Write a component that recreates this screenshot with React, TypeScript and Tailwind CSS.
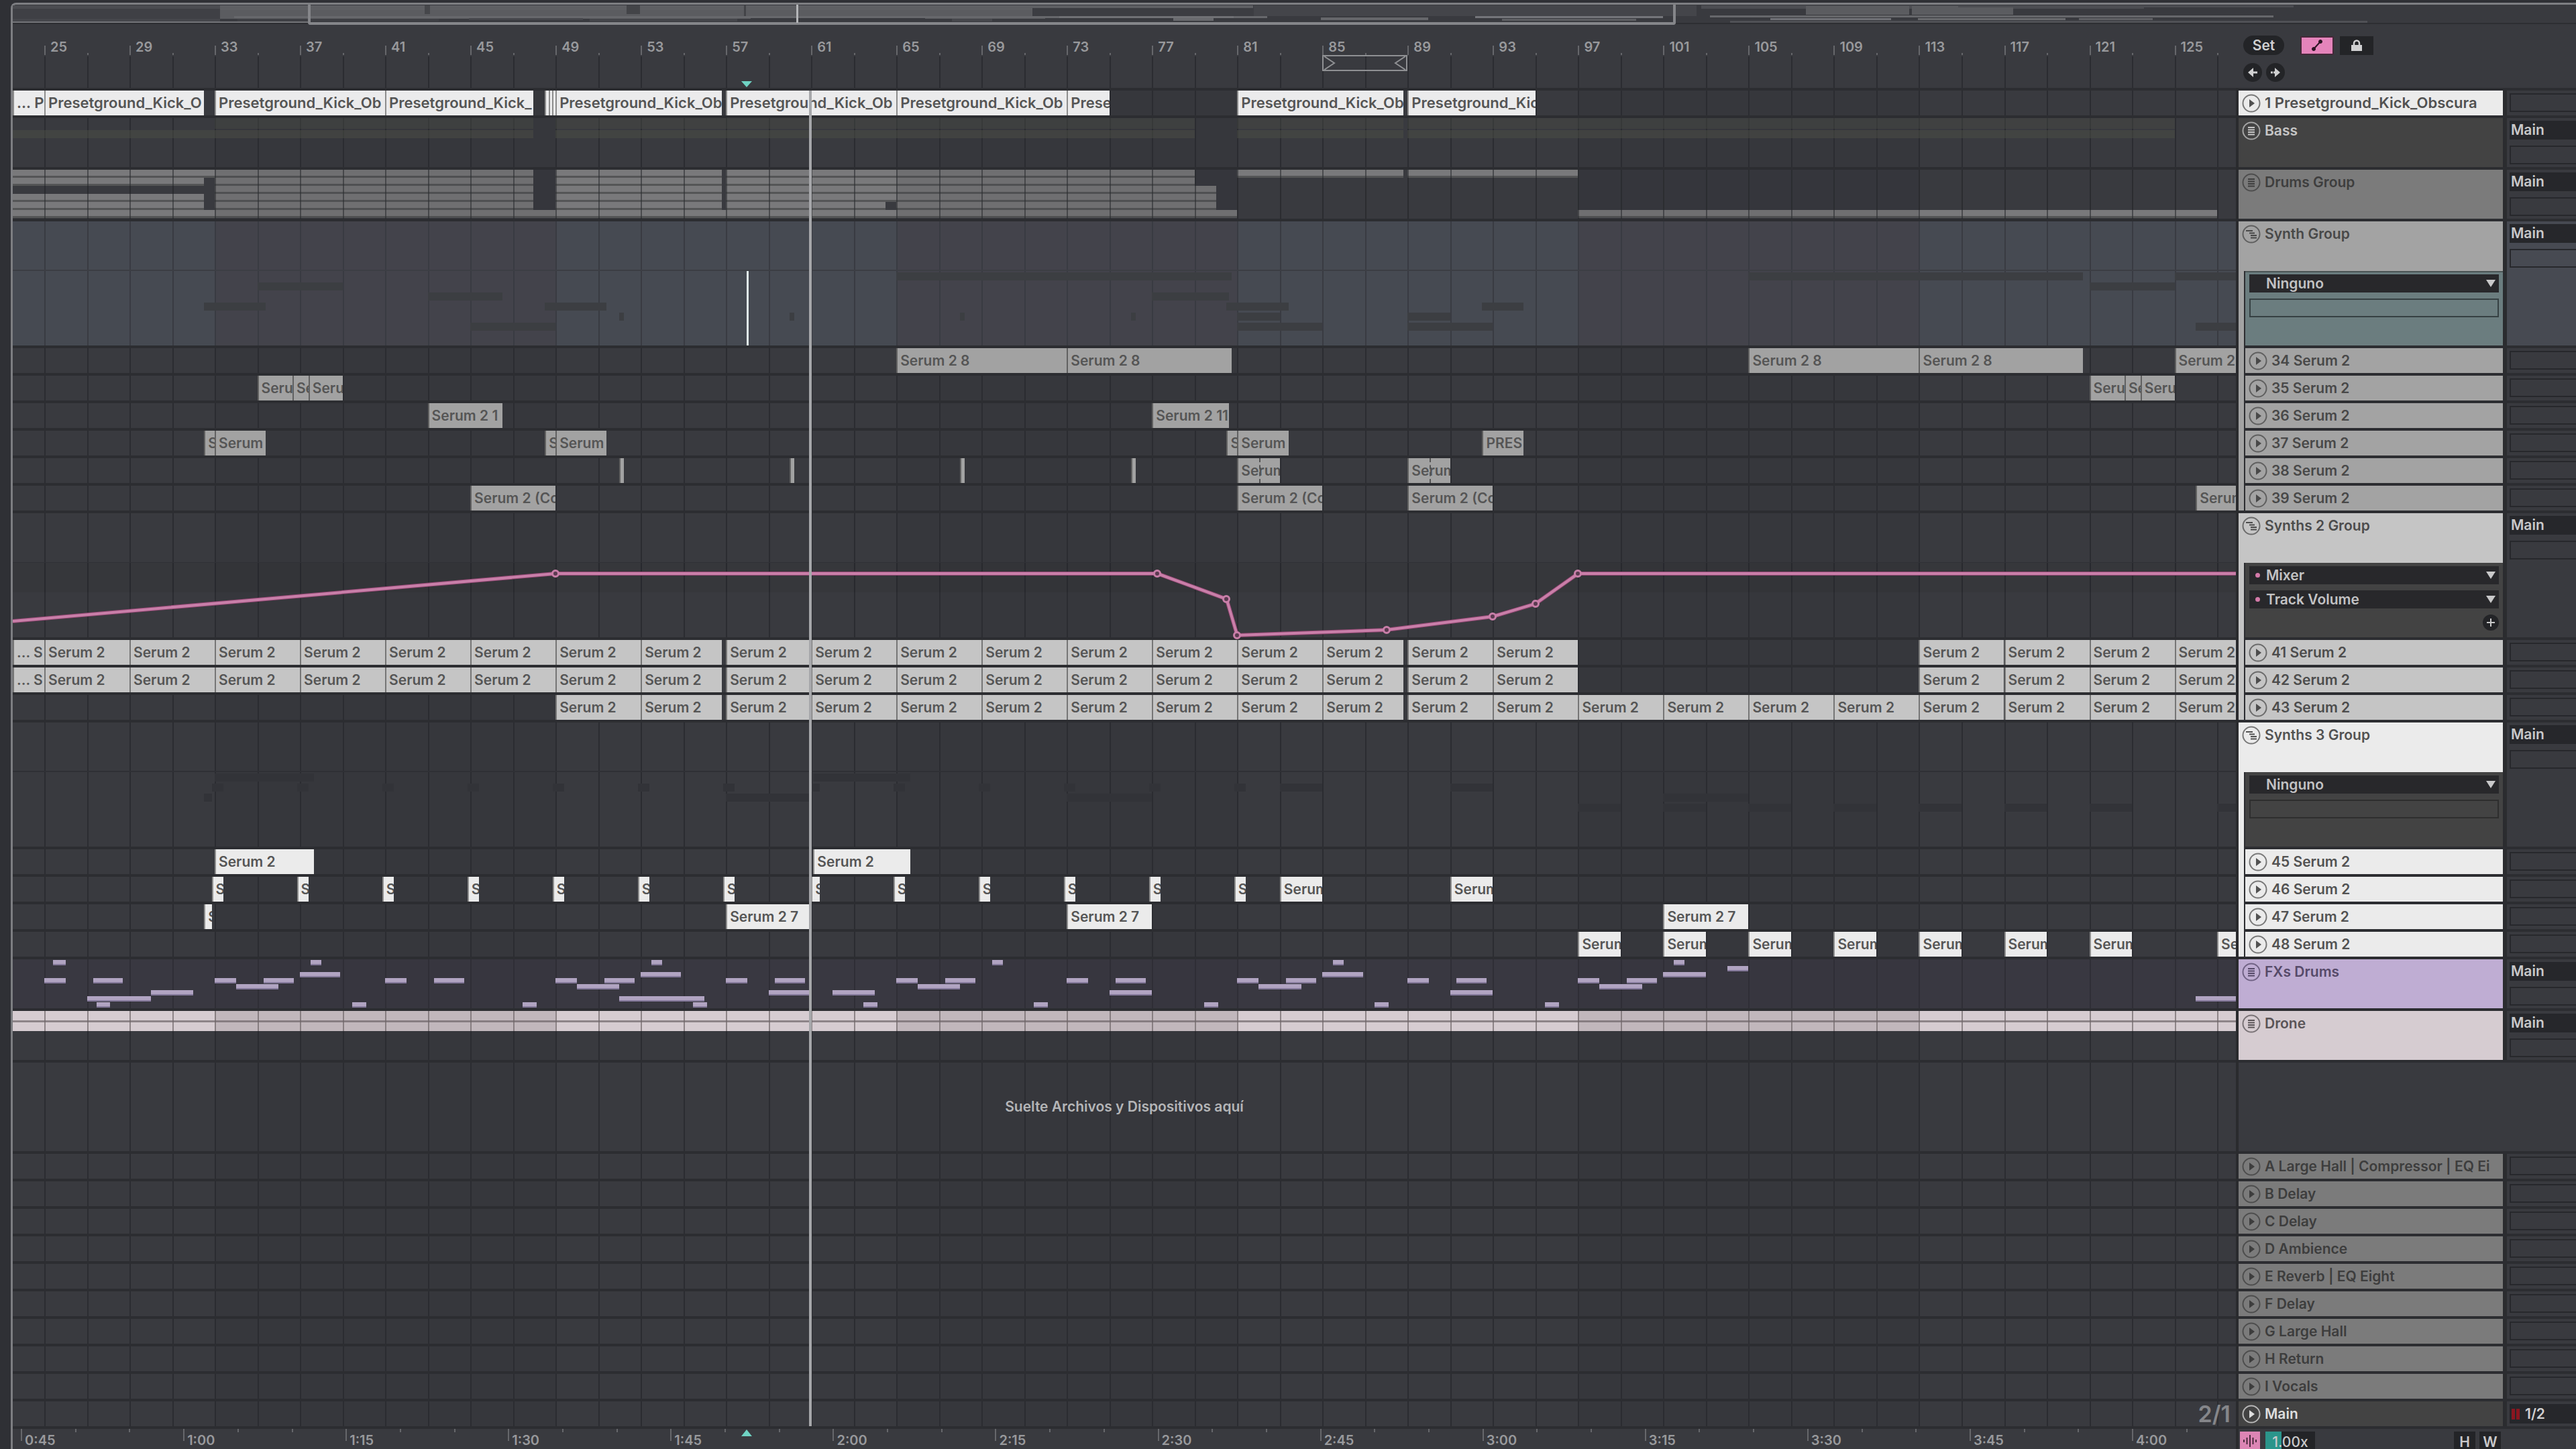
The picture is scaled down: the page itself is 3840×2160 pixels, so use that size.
import React from "react";

type Clip = [start: number, end: number, label?: string, marker?: boolean];

const FIRST_BAR = 23.52;
const LAST_BAR = 127.88;
const SPAN = LAST_BAR - FIRST_BAR;
const at = (bar: number) => `${((bar - FIRST_BAR) / SPAN) * 100}%`;
const wide = (a: number, b: number) => `${((Math.min(b, LAST_BAR) - a) / SPAN) * 100}%`;

const every = (from: number, to: number, step: number) => {
  const out: number[] = [];
  for (let b = from; b <= to; b += step) out.push(b);
  return out;
};

const KICK = "Presetground_Kick_Ob";
const kickClips: Clip[] = [
  [FIRST_BAR, 25, "... P"],
  [25, 32.5, "Presetground_Kick_O"],
  [33, 41, KICK],
  [41, 47.95, "Presetground_Kick_"],
  [48.5, 48.67],
  [48.67, 48.84],
  [48.84, 49],
  [49, 56.8, KICK],
  [57, 65, KICK],
  [65, 73, KICK],
  [73, 75, "Prese"],
  [81, 88.8, KICK],
  [89, 95, "Presetground_Kic"],
];

const synthTracks: { name: string; clips: Clip[] }[] = [
  {
    name: "34 Serum 2",
    clips: [
      [65, 73, "Serum 2 8"],
      [73, 80.75, "Serum 2 8"],
      [105, 113, "Serum 2 8"],
      [113, 120.7, "Serum 2 8"],
      [125, 129, "Serum 2"],
    ],
  },
  {
    name: "35 Serum 2",
    clips: [
      [35, 36.65, "Seru"],
      [36.65, 37.4, "Se"],
      [37.4, 39, "Seru"],
      [121, 122.65, "Seru"],
      [122.65, 123.4, "Se"],
      [123.4, 125, "Seru"],
    ],
  },
  { name: "36 Serum 2", clips: [[43, 46.5, "Serum 2 1"], [77, 80.6, "Serum 2 11"]] },
  {
    name: "37 Serum 2",
    clips: [
      [32.5, 33, "S"],
      [33, 35.4, "Serum"],
      [48.5, 49, "S"],
      [49, 51.4, "Serum"],
      [80.5, 81, "S"],
      [81, 83.4, "Serum"],
      [92.5, 94.45, "PRES"],
    ],
  },
  {
    name: "38 Serum 2",
    clips: [
      [52, 52.22],
      [60, 60.22],
      [68, 68.22],
      [76, 76.22],
      [81, 83, "Serum", true],
      [89, 91, "Serum", true],
    ],
  },
  {
    name: "39 Serum 2",
    clips: [
      [45, 49, "Serum 2 (Co"],
      [81, 85, "Serum 2 (Co"],
      [89, 93, "Serum 2 (Co"],
      [126, 130, "Serum"],
    ],
  },
];

const fourBars = (from: number, to: number): Clip[] =>
  every(from, to, 4).map((b): Clip => [b, b === 53 || b === 85 ? b + 3.8 : b + 4, "Serum 2"]);

const layered: Clip[] = [[FIRST_BAR, 25, "... S"], ...fourBars(25, 93), ...fourBars(113, 125)];
const synth2Tracks: { name: string; clips: Clip[] }[] = [
  { name: "41 Serum 2", clips: layered },
  { name: "42 Serum 2", clips: layered },
  { name: "43 Serum 2", clips: fourBars(49, 125) },
];

const synth3Tracks: { name: string; clips: Clip[] }[] = [
  { name: "45 Serum 2", clips: [[33, 37.65, "Serum 2"], [61.1, 65.65, "Serum 2"]] },
  {
    name: "46 Serum 2",
    clips: [
      ...every(33, 81, 4).map((b): Clip => [b === 61 ? 61 : b - 0.14, b + 0.4, "S"]),
      [83, 85, "Serum"],
      [91, 93, "Serum"],
    ],
  },
  {
    name: "47 Serum 2",
    clips: [
      [32.5, 32.86, "S"],
      [57, 60.95, "Serum 2 7"],
      [73, 77, "Serum 2 7"],
      [101, 105, "Serum 2 7"],
    ],
  },
  {
    name: "48 Serum 2",
    clips: [97, 101, 105, 109, 113, 117, 121, 127].map((b): Clip => [b, b + 2, b === 127 ? "Se" : "Serum"]),
  },
];

const drumLanes: Clip[][] = [
  [[FIRST_BAR, 47.95], [49, 56.8], [57, 79], [81, 88.8], [89, 97]],
  [[FIRST_BAR, 32.5], [33, 47.95], [49, 56.8], [57, 79]],
  [[33, 47.95], [49, 56.8], [57, 80]],
  [[FIRST_BAR, 32.5], [33, 47.95], [49, 56.8], [57, 80]],
  [[FIRST_BAR, 32.5], [33, 47.95], [49, 56.8], [57, 64.5], [65, 80]],
  [[FIRST_BAR, 81], [97, 127]],
];

const fxLanes: [number, number][][] = [
  [[25.4, 26], [37.5, 38], [53.5, 54], [69.5, 70], [85.5, 86], [101.5, 102]],
  [[104, 105]],
  [[37, 38.9], [53, 54.9], [85, 86.9], [101, 103]],
  [
    [25, 26], [27.3, 28.7], [33, 34], [35.3, 36.7], [41, 42], [43.3, 44.7], [49, 50], [51.3, 52.7],
    [57, 58], [59.3, 60.7], [65, 66], [67.3, 68.7], [73, 74], [75.3, 76.7], [81, 82], [83.3, 84.7],
    [89, 90], [91.3, 92.7], [97, 98], [99.3, 100.7],
  ],
  [[34, 36], [50, 52], [66, 68], [82, 84], [98, 100]],
  [[30, 32], [59, 60.9], [62, 64], [75, 77], [91, 93]],
  [[27, 30], [52, 56], [126, 130]],
  [
    [27.45, 28.1], [39.45, 40.1], [47.45, 48.1], [55.45, 56.1], [63.45, 64.1], [71.45, 72.1],
    [79.45, 80.1], [87.45, 88.1], [95.45, 96.1],
  ],
];

const envelope: [bar: number, y: number][] = [
  [49, 16],
  [77.25, 16],
  [80.5, 54],
  [81, 108],
  [88, 100],
  [93, 80],
  [95, 61],
  [97, 16],
];

const overviewBlocks: [x: number, w: number, y: number, h: number, tone: string][] = [
  [0, 309, 1, 5, "bg-[#4b4c51]"],
  [0, 309, 6, 15, "bg-[#3f4045]"],
  [0, 309, 21, 5, "bg-[#46474c]"],
  [309, 1540, 1, 7, "bg-[#5e5f63]"],
  [309, 1230, 8, 13, "bg-[#5b5c60]"],
  [330, 1540, 17, 3, "bg-[#67686c]"],
  [335, 300, 21, 4, "bg-[#3e3f44]"],
  [680, 170, 20, 3, "bg-[#46474c]"],
  [860, 220, 21, 4, "bg-[#44454a]"],
  [1100, 260, 20, 3, "bg-[#393a3f]"],
  [1400, 60, 21, 4, "bg-[#46474c]"],
  [614, 8, 1, 13, "bg-[#46474b]"],
  [915, 20, 1, 13, "bg-[#434448]"],
  [1090, 3, 1, 16, "bg-[#434448]"],
  [1520, 330, 5, 12, "bg-[#3c3d42]"],
  [1850, 660, 1, 16, "bg-[#44454a]"],
  [1560, 260, 17, 3, "bg-[#707175]"],
  [1730, 60, 20, 4, "bg-[#696a6e]"],
  [1950, 160, 19, 4, "bg-[#66676b]"],
  [2180, 280, 17, 3, "bg-[#74757a]"],
  [2220, 200, 21, 3, "bg-[#5f6064]"],
  [2517, 660, 1, 5, "bg-[#4c4d52]"],
  [2673, 154, 2, 13, "bg-[#5b5c60]"],
  [2831, 151, 2, 13, "bg-[#5b5c60]"],
  [2530, 840, 16, 3, "bg-[#66676b]"],
  [2620, 180, 20, 3, "bg-[#717277]"],
  [2840, 220, 20, 3, "bg-[#6a6b6f]"],
  [3080, 110, 20, 3, "bg-[#606165]"],
  [2560, 950, 24, 3, "bg-[#505156]"],
  [2900, 500, 1, 3, "bg-[#4c4d52]"],
];
const OVERVIEW = 3821;
const ov = (v: number) => `${(v / OVERVIEW) * 100}%`;

function GridLines({ tone = "bg-[#2b2c31]" }: { tone?: string }) {
  return (
    <>
      {every(25, 127, 2).map((b) => (
        <div key={b} className={`absolute inset-y-0 w-[2px] ${tone}`} style={{ left: at(b) }} />
      ))}
    </>
  );
}

function Shades({ tone }: { tone: string }) {
  return (
    <>
      {[33, 65, 97].map((b) => (
        <div key={b} className={`absolute inset-y-0 ${tone}`} style={{ left: at(b), width: wide(b, b + 16) }} />
      ))}
    </>
  );
}

function ClipLane({ clips, tone, size = "text-[21px]" }: { clips: Clip[]; tone: string; size?: string }) {
  return (
    <div className={`relative h-[41px] overflow-hidden border-b-4 border-[#2c2d31] ${size}`}>
      {clips.map(([a, b, label, marker], i) => (
        <div
          key={i}
          className={`absolute inset-y-0 flex items-center overflow-hidden border-l-2 border-black/40 font-semibold whitespace-nowrap text-[#555] ${tone}`}
          style={{ left: at(a), width: wide(a, b) }}
        >
          {marker && <div className="absolute inset-y-0 left-1/2 border-l-2 border-dashed border-[#555]" />}
          {label && <span className="pl-[4px]">{label}</span>}
        </div>
      ))}
    </div>
  );
}

function Ghosts({ tracks, tone }: { tracks: { name: string; clips: Clip[] }[]; tone: string }) {
  return (
    <div className="flex flex-col gap-[3px] pt-[2px]">
      {tracks.map((t) => (
        <div key={t.name} className="relative h-3">
          {t.clips.map(([a, b], i) => (
            <div key={i} className={`absolute inset-y-0 ${tone}`} style={{ left: at(a), width: wide(a, b) }} />
          ))}
        </div>
      ))}
    </div>
  );
}

function Envelope() {
  const points = [[FIRST_BAR, 87], ...envelope, [LAST_BAR, 16]]
    .map(([b, y]) => `${((b - FIRST_BAR) / SPAN) * 1000},${y}`)
    .join(" ");
  return (
    <div className="relative h-[111px]">
      <div className="absolute inset-x-0 top-0 h-11 bg-black/5" />
      <svg className="absolute inset-0 h-full w-full" viewBox="0 0 1000 111" preserveAspectRatio="none">
        <polyline points={points} fill="none" stroke="#8e4670" strokeWidth="6" vectorEffect="non-scaling-stroke" />
        <polyline points={points} fill="none" stroke="#c97fa9" strokeWidth="4" vectorEffect="non-scaling-stroke" />
      </svg>
      {envelope.map(([b, y]) => (
        <div
          key={b}
          className="absolute size-3 -translate-x-1/2 -translate-y-1/2 rounded-full border-[3px] border-[#c97fa9] bg-[#5b3a50]"
          style={{ left: at(b), top: y }}
        />
      ))}
    </div>
  );
}

function Lanes() {
  return (
    <div className="relative flex min-w-0 flex-1 flex-col overflow-hidden">
      <div className="absolute inset-x-0 top-[48px] bottom-[30px]">
        <div className="absolute inset-x-0 top-[51px] bottom-0">
          <Shades tone="bg-[#36373c]" />
        </div>
        <GridLines />
      </div>

      {/* Bar ruler */}
      <div className="relative h-[99px] shrink-0 border-b-4 border-[#2c2d31]">
        {every(25, 125, 4).map((b) => (
          <div key={b} className="absolute top-[21px] h-6" style={{ left: at(b) }}>
            <div className="absolute top-[11px] left-0 h-[14px] w-[2px] bg-[#66676b]" />
            <span className="pl-[9px] text-[20px] leading-[26px] font-semibold text-[#98999c]">{b}</span>
          </div>
        ))}
        {every(27, 127, 4).map((b) => (
          <div key={b} className="absolute top-[43px] h-[3px] w-[2px] bg-[#66676b]" style={{ left: at(b) }} />
        ))}
        <div
          className="absolute top-[46px] flex h-6 justify-between border-2 border-[#8f9093]"
          style={{ left: at(85), width: wide(85, 89) }}
        >
          <svg className="h-full w-[18px]" viewBox="0 0 18 20" fill="none" stroke="#8f9093" strokeWidth="2">
            <path d="M1 0 L16 10 L1 20" />
          </svg>
          <svg className="h-full w-[18px]" viewBox="0 0 18 20" fill="none" stroke="#8f9093" strokeWidth="2">
            <path d="M17 0 L2 10 L17 20" />
          </svg>
        </div>
        <svg className="absolute top-[85px] h-[9px] w-4 -translate-x-1/2" style={{ left: at(57.98) }} viewBox="0 0 16 9">
          <path d="M0 0h16L8 9z" fill="#6fd3c3" />
        </svg>
      </div>

      <div className="relative flex flex-1 flex-col">
        <ClipLane clips={kickClips} tone="bg-[#ebebec]" size="text-[22px]" />

        {/* Bass */}
        <div className="relative h-[77px] border-b-4 border-[#2c2d31]">
          {[
            [33, 47.95],
            [49, 79],
            [81, 88.8],
            [89, 125],
          ].map(([a, b]) => (
            <div key={a} className="absolute top-0 h-4 bg-[#4b4d46]/40" style={{ left: at(a), width: wide(a, b) }} />
          ))}
          {[
            [FIRST_BAR, 47.95],
            [49, 79],
            [81, 88.8],
            [89, 125],
          ].map(([a, b]) => (
            <div key={a} className="absolute top-[18px] h-3 bg-[#4b4d46]/50" style={{ left: at(a), width: wide(a, b) }} />
          ))}
        </div>

        {/* Drums */}
        <div className="relative flex h-[77px] flex-col border-b-4 border-[#2c2d31]">
          {drumLanes.map((lane, i) => (
            <div key={i} className="relative h-3">
              {lane.map(([a, b]) => (
                <div
                  key={a}
                  className="absolute inset-y-0 border-b-[3px] border-[#545556] bg-[#79797b]"
                  style={{ left: at(a), width: wide(a, b) }}
                />
              ))}
            </div>
          ))}
          <Shades tone="bg-[#35363b]/15" />
          <GridLines tone="bg-[#2c2d30]/60" />
        </div>

        {/* Synth group */}
        <div className="relative h-[189px] border-b-4 border-[#2c2d31] bg-[#464a52]">
          <Shades tone="bg-[#43434b]" />
          <GridLines tone="bg-[#393b42]" />
          <div className="relative h-[74px] border-b-2 border-[#3c3e44]" />
          <Ghosts tracks={synthTracks} tone="bg-[#3c3e42]" />
          <div className="absolute top-[74px] bottom-0 w-[3px] bg-[#dfeae8]" style={{ left: at(57.98) }} />
        </div>
        {synthTracks.map((t) => (
          <ClipLane key={t.name} clips={t.clips} tone="bg-[#a2a2a2]" />
        ))}

        {/* Synths 2 group */}
        <div className="h-[189px] border-b-4 border-[#2c2d31]">
          <div className="h-[74px] border-b border-[#303136]" />
          <Envelope />
        </div>
        {synth2Tracks.map((t) => (
          <ClipLane key={t.name} clips={t.clips} tone="bg-[#c5c5c5]" />
        ))}

        {/* Synths 3 group */}
        <div className="h-[189px] border-b-4 border-[#2c2d31]">
          <div className="h-[74px] border-b-2 border-[#2f3035]" />
          <Ghosts tracks={synth3Tracks} tone="bg-[#323338]" />
        </div>
        {synth3Tracks.map((t) => (
          <ClipLane key={t.name} clips={t.clips} tone="bg-[#ebebeb]" />
        ))}

        {/* FXs drums */}
        <div className="flex h-[77px] flex-col gap-px border-b-4 border-[#2c2d31] bg-[#3d3547]/25 pt-[1px]">
          {fxLanes.map((lane, i) => (
            <div key={i} className="relative h-2">
              {lane.map(([a, b]) => (
                <div
                  key={a}
                  className="absolute inset-y-0 border-b-2 border-[#84799a] bg-[#b1a4c2]"
                  style={{ left: at(a), width: wide(a, b) }}
                />
              ))}
            </div>
          ))}
        </div>

        {/* Drone */}
        <div className="h-[77px] border-b-4 border-[#2c2d31]">
          <div className="relative flex h-[30px] flex-col gap-[3px] bg-[#8d8488]">
            <div className="flex-1 bg-[#d6ccd1]" />
            <div className="flex-1 bg-[#d6ccd1]" />
            <Shades tone="bg-[#6d6568]/20" />
            <GridLines tone="bg-[#6d6568]/70" />
          </div>
        </div>

        <div className="flex min-h-0 flex-1 items-center justify-center border-b-4 border-[#2c2d31] text-[21px] font-semibold text-[#b4b5b7]">
          Suelte Archivos y Dispositivos aquí
        </div>

        {returns.map((r) => (
          <div key={r} className="h-[41px] border-b-4 border-[#2c2d31]" />
        ))}
        <div className="flex h-[41px] items-center justify-end border-b-4 border-[#2c2d31] pr-2 text-[34px] font-semibold text-[#85868a]">
          2/1
        </div>

        <div className="absolute top-0 bottom-1 w-1 bg-[#a6a7aa]" style={{ left: at(60.91) }} />
      </div>

      {/* Time ruler */}
      <div className="relative h-[30px] shrink-0">
        {every(0, 40, 1).map((i) => {
          const s = 45 + i * 5;
          const major = i % 3 === 0;
          return (
            <div key={i} className="absolute top-0" style={{ left: at(23.9 + i * 2.541) }}>
              <div className={`absolute top-0 w-[2px] bg-[#66676b] ${major ? "h-[18px]" : "h-[5px]"}`} />
              {major && (
                <span className="block pt-[5px] pl-[6px] text-[20px] leading-[24px] font-semibold text-[#98999c]">
                  {Math.floor(s / 60)}:{String(s % 60).padStart(2, "0")}
                </span>
              )}
            </div>
          );
        })}
        <svg className="absolute top-[1px] h-[10px] w-4 -translate-x-1/2" style={{ left: at(57.98) }} viewBox="0 0 16 10">
          <path d="M0 10h16L8 0z" fill="#6fd3c3" />
        </svg>
      </div>
    </div>
  );
}

const returns = [
  "A Large Hall | Compressor | EQ Ei",
  "B Delay",
  "C Delay",
  "D Ambience",
  "E Reverb | EQ Eight",
  "F Delay",
  "G Large Hall",
  "H Return",
  "I Vocals",
];

function PlayIcon() {
  return (
    <svg className="size-7" viewBox="0 0 28 28" fill="none">
      <circle cx="14" cy="14" r="12.5" stroke="currentColor" strokeWidth="2" opacity="0.75" />
      <path d="M11 8v12l8-6z" fill="currentColor" />
    </svg>
  );
}

function FoldIcon({ open = false }: { open?: boolean }) {
  return (
    <svg className="size-7" viewBox="0 0 28 28" fill="none" stroke="currentColor" strokeWidth="2">
      <circle cx="14" cy="14" r="12.5" opacity="0.75" />
      {open ? <path d="M6 9h10M11 12.500h8M13 16h9M13 19.500h9" /> : <path d="M9 9h10M9 12.500h10M9 16h10M9 19.500h10" />}
    </svg>
  );
}

function Title({
  name,
  fold,
  tone,
  size = "text-[21px]",
}: {
  name: string;
  fold?: "open" | "closed";
  tone: string;
  size?: string;
}) {
  return (
    <div className={`min-w-0 flex-1 overflow-hidden ${tone}`}>
      <div className={`flex h-[37px] items-center gap-[6px] pl-[5px] font-semibold whitespace-nowrap ${size}`}>
        <button type="button" aria-label={name} className="shrink-0">
          {fold ? <FoldIcon open={fold === "open"} /> : <PlayIcon />}
        </button>
        <span>{name}</span>
      </div>
    </div>
  );
}

function Mixer({ routed = false, tone = "bg-[#393a3f]" }: { routed?: boolean; tone?: string }) {
  return (
    <div className={`flex w-[109px] shrink-0 flex-col gap-[9px] border-l-[6px] border-[#2b2c2f] pt-1 pl-1 ${tone}`}>
      {routed && (
        <button
          type="button"
          className="h-[28px] bg-[#26272b] pl-[2px] text-left text-[21px] leading-[28px] font-semibold text-[#c9c9ca]"
        >
          Main
        </button>
      )}
      <div className="h-[28px] border-2 border-r-0 border-[#27282c]" />
    </div>
  );
}

function Picker({ label, dot = false }: { label: string; dot?: boolean }) {
  return (
    <label className="relative block h-[27px]">
      <select
        aria-label={label}
        className="block h-full w-full appearance-none bg-[#28282b] pl-[25px] text-[21px] leading-[27px] font-semibold text-[#c2c2c3]"
      >
        <option>{label}</option>
      </select>
      {dot && <span className="absolute top-[10px] left-[9px] size-[7px] rounded-full bg-[#d47aa9]" />}
      <svg className="pointer-events-none absolute top-2 right-[5px] h-[11px] w-[14px]" viewBox="0 0 14 11">
        <path d="M0 0h14L7 11z" fill="#c9c9ca" />
      </svg>
    </label>
  );
}

function Group({
  name,
  tone,
  strip,
  mixer,
  pane,
  tracks,
}: {
  name: string;
  tone: string;
  strip: string;
  mixer?: string;
  pane: React.ReactNode;
  tracks: { name: string }[];
}) {
  return (
    <section>
      <div className="flex h-[74px]">
        <Title name={name} fold="open" tone={tone} />
        <Mixer routed tone={mixer} />
      </div>
      <div className="flex">
        <div className={`mr-[2px] w-2 shrink-0 ${strip}`} />
        <div className="flex min-w-0 flex-1 flex-col gap-1">
          <div className="flex h-[111px]">
            {pane}
            <div className={`w-[109px] shrink-0 border-l-[6px] border-[#2b2c2f] ${mixer ?? "bg-[#393a3f]"}`} />
          </div>
          {tracks.map((t) => (
            <div key={t.name} className="flex h-[37px]">
              <Title name={t.name} tone={tone} />
              <Mixer />
            </div>
          ))}
        </div>
      </div>
    </section>
  );
}

function Panel() {
  return (
    <aside className="flex w-[507px] shrink-0 flex-col">
      <div className="flex h-[95px] flex-col gap-3 pt-[17px] pl-[11px]">
        <div className="flex items-center">
          <button type="button" className="h-[29px] w-[61px] rounded-full bg-[#232427] text-[21px] leading-[28px] font-semibold text-[#d0d0d1]">
            Set
          </button>
          <button
            type="button"
            aria-label="Automation mode"
            className="ml-6 flex h-[28px] w-[50px] items-center justify-center border-2 border-[#46293a] bg-[#e584bb]"
          >
            <svg className="h-5 w-[22px]" viewBox="0 0 22 20" fill="#2c1524" stroke="#2c1524">
              <circle cx="6" cy="15" r="2.5" />
              <circle cx="16" cy="4" r="2.5" />
              <path d="M6 15 L16 4" strokeWidth="2" />
            </svg>
          </button>
          <button
            type="button"
            aria-label="Lock envelopes"
            className="ml-[9px] flex h-[28px] w-[50px] items-center justify-center bg-[#232427]"
          >
            <svg className="h-[18px] w-4" viewBox="0 0 16 18" fill="none">
              <rect x="0" y="8" width="16" height="9" fill="#d0d0d1" />
              <path d="M4 9V5.500a4 4 0 0 1 8 0V9" stroke="#d0d0d1" strokeWidth="2.500" />
            </svg>
          </button>
        </div>
        <div className="flex gap-[6px]">
          {[
            ["Previous locator", "M17 12.500h4v3h-4v0zM7 14l8-7v5.500h3v3h-3V21z"],
            ["Next locator", "M7 12.500h4v3H7v0zM21 14l-8-7v5.500h-3v3h3V21z"],
          ].map(([label, d]) => (
            <button key={label} type="button" aria-label={label} className="size-7 rounded-full bg-[#232427]">
              <svg className="size-7" viewBox="0 0 28 28" fill="#d0d0d1">
                <path d={d} />
              </svg>
            </button>
          ))}
        </div>
      </div>

      <div className="flex flex-1 flex-col gap-1 border-l-4 border-[#2a2b2e] bg-[#2c2d31] pt-1">
        <div className="flex h-[37px]">
          <Title name="1 Presetground_Kick_Obscura" tone="bg-[#ebebeb] text-[#515151]" size="text-[22px]" />
          <Mixer />
        </div>
        <div className="flex h-[73px]">
          <Title name="Bass" fold="closed" tone="bg-[#434343] text-[#c6c6c6]" />
          <Mixer routed />
        </div>
        <div className="flex h-[73px]">
          <Title name="Drums Group" fold="closed" tone="bg-[#7b7b7b] text-[#3e3e3e]" />
          <Mixer routed />
        </div>
        <Group
          name="Synth Group"
          tone="bg-[#a3a3a3] text-[#484848]"
          strip="bg-[#a3a3a3]"
          mixer="bg-[#474a52]"
          tracks={synthTracks}
          pane={
            <div className="flex min-w-0 flex-1 flex-col gap-[9px] border-t-2 border-[#4b5556] bg-[#6b7d7f] px-[6px] pt-[3px]">
              <Picker label="Ninguno" />
              <div className="h-[28px] border-2 border-[#364143]" />
            </div>
          }
        />
        <Group
          name="Synths 2 Group"
          tone="bg-[#c5c5c5] text-[#4c4c4c]"
          strip="bg-[#c5c5c5]"
          tracks={synth2Tracks}
          pane={
            <div className="flex min-w-0 flex-1 flex-col gap-[9px] bg-[#434343] px-[6px] pt-[5px]">
              <Picker label="Mixer" dot />
              <Picker label="Track Volume" dot />
              <button
                type="button"
                aria-label="Add automation lane"
                className="flex size-6 items-center justify-center self-end rounded-full bg-[#232427]"
              >
                <svg className="size-3" viewBox="0 0 12 12" stroke="#c9c9ca" strokeWidth="2">
                  <path d="M6 0v12M0 6h12" />
                </svg>
              </button>
            </div>
          }
        />
        <Group
          name="Synths 3 Group"
          tone="bg-[#ebebeb] text-[#525252]"
          strip="bg-[#ebebeb]"
          tracks={synth3Tracks}
          pane={
            <div className="flex min-w-0 flex-1 flex-col gap-[9px] bg-[#434343] px-[6px] pt-[5px]">
              <Picker label="Ninguno" />
              <div className="h-[28px] border-2 border-[#2e2e2e]" />
            </div>
          }
        />
        <div className="flex h-[73px]">
          <Title name="FXs Drums" fold="closed" tone="bg-[#bfadd3] text-[#564a69]" />
          <Mixer routed />
        </div>
        <div className="flex h-[73px]">
          <Title name="Drone" fold="closed" tone="bg-[#d6ccd1] text-[#5a5457]" />
          <Mixer routed />
        </div>
        <div className="min-h-0 flex-1 bg-[#393a3f]" />
        {returns.map((r) => (
          <div key={r} className="flex h-[37px]">
            <Title name={r} tone="bg-[#7b7b7b] text-[#3d3d3d]" />
            <Mixer />
          </div>
        ))}
        <div className="flex h-[37px]">
          <Title name="Main" tone="bg-[#434343] text-[#dedede]" />
          <div className="w-[109px] shrink-0 border-l-[6px] border-[#2b2c2f] bg-[#393a3f] pt-1 pl-1">
            <button
              type="button"
              className="flex h-[29px] w-full items-center gap-[8px] bg-[#26272b] pl-[3px] text-[21px] font-semibold text-[#d0d0d1]"
            >
              <span className="flex gap-[2px]">
                <span className="h-4 w-[5px] bg-[#8a1620]" />
                <span className="h-4 w-[5px] bg-[#8a1620]" />
              </span>
              1/2
            </button>
          </div>
        </div>
        <div className="flex h-[30px] items-start bg-[#393a3f] pt-1 pl-[2px] text-[21px] font-medium text-[#c9c9ca]">
          <button type="button" aria-label="Waveform zoom" className="flex h-7 w-[30px] items-center justify-center bg-[#dc85b4]">
            <svg className="h-5 w-[22px]" viewBox="0 0 22 20" stroke="#4a2a3d" strokeWidth="2">
              <path d="M2 8v4M6.500 5v10M11 1v18M15.500 5v10M20 8v4" />
            </svg>
          </button>
          <button type="button" className="relative ml-2 h-7 w-[74px] bg-[#232427]">
            <span className="absolute inset-y-0 left-0 w-[24px] bg-[#2b958b]" />
            <span className="relative">1.00x</span>
          </button>
          <button type="button" className="ml-[207px] h-7 w-8 bg-[#232427] font-semibold">
            H
          </button>
          <button type="button" className="ml-[6px] h-7 w-8 bg-[#232427] font-semibold">
            W
          </button>
        </div>
      </div>
    </aside>
  );
}

function Overview() {
  return (
    <div className="relative h-[29px] shrink-0 border-b-2 border-[#2d2e32]">
      {overviewBlocks.map(([x, w, y, h, tone], i) => (
        <div key={i} className={`absolute ${tone}`} style={{ left: ov(x), width: ov(w), top: y, height: h }} />
      ))}
      <div className="absolute bottom-0 left-0 h-[2px] bg-[#737478]" style={{ width: ov(441) }} />
      <div
        className="absolute top-0 -bottom-[3px] rounded-b border-x-4 border-b-4 border-[#85868a]"
        style={{ left: ov(440), width: ov(2039) }}
      />
      <div className="absolute top-0 bottom-0 w-[3px] bg-[#b5b6b9]" style={{ left: ov(1168) }} />
    </div>
  );
}

export default function App() {
  return (
    <main className="flex h-screen flex-col overflow-hidden bg-[#2f3035] pt-1 pl-4 font-['Inter',sans-serif]">
      <div className="flex min-h-0 flex-1 flex-col rounded-tl-lg border-t-[3px] border-l-[3px] border-[#7d7e82] bg-[#393a3f]">
        <Overview />
        <div className="flex min-h-0 flex-1">
          <Lanes />
          <Panel />
        </div>
      </div>
    </main>
  );
}
